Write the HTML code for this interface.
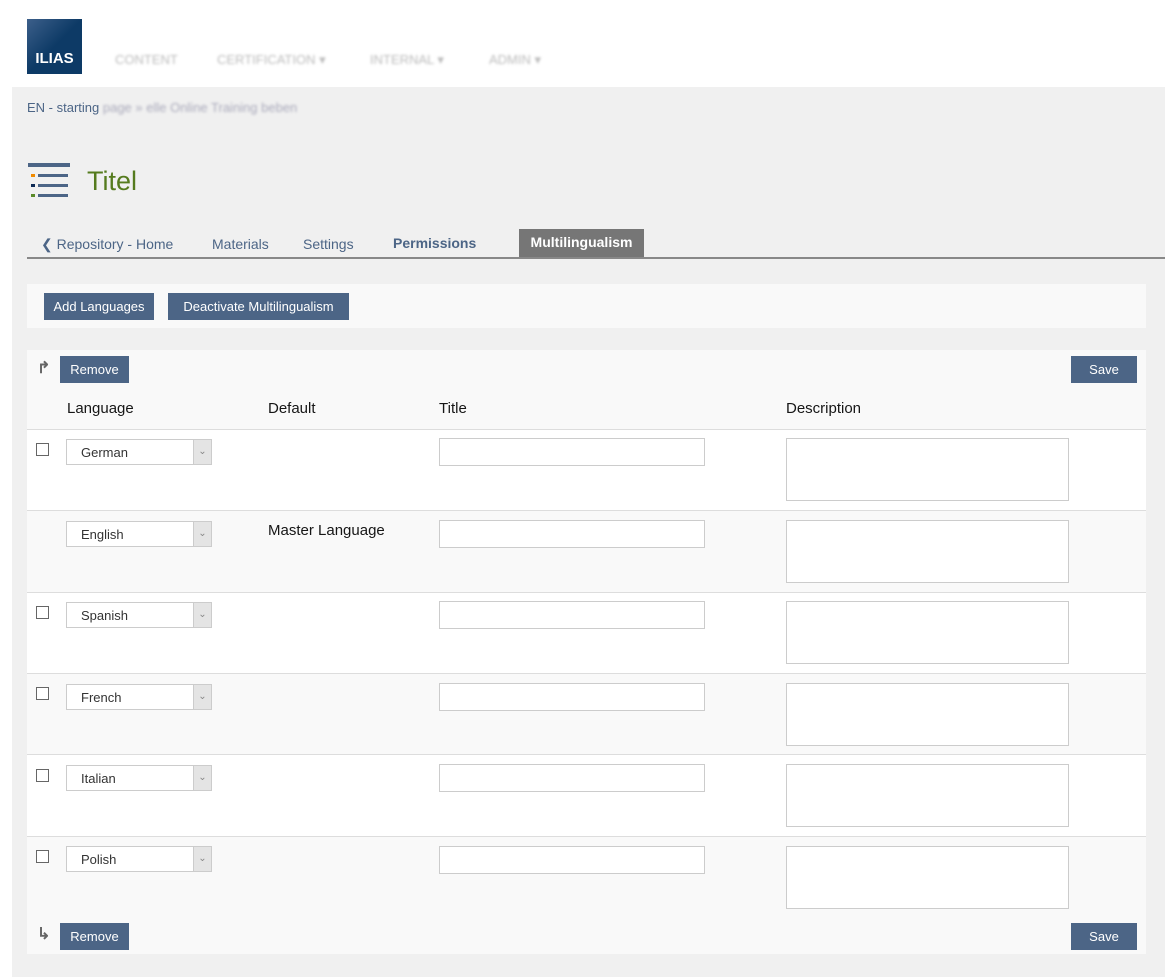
<!DOCTYPE html><html><head><style>
body{margin:0;width:1165px;height:977px;background:#fff;font-family:"Liberation Sans",sans-serif;position:relative;overflow:hidden;font-size:13px;color:#161616}
.a{position:absolute}
.btn{position:absolute;background:#4c6586;color:#fff;font-size:13px;height:27px;line-height:27px;text-align:center}
.blur{color:#bbb;filter:blur(1.2px);font-size:13px}
.sel{position:absolute;left:66px;width:146px;height:26px;background:#fff;border:1px solid #ccc;box-sizing:border-box}
.sel span{position:absolute;left:14px;top:5px;font-size:13px;color:#333}
.sel i{position:absolute;right:0;top:0;width:17px;height:24px;background:#e4e4e4;border-left:1px solid #ccc;color:#888;font-style:normal;font-size:10px;text-align:center;line-height:24px}
.in{position:absolute;left:439px;width:266px;height:28px;border:1px solid #ccc;background:#fff;box-sizing:border-box}
.ta{position:absolute;left:786px;width:283px;height:63px;border:1px solid #ccc;background:#fff;box-sizing:border-box}
.cb{position:absolute;left:36px;width:13px;height:13px;border:1px solid #666;background:#fff;box-sizing:border-box}
.row{position:absolute;left:27px;width:1119px;border-top:1px solid #ddd}
</style></head><body>
<div class="a" style="left:27px;top:19px;width:55px;height:55px;background:linear-gradient(135deg,#3c5f8a,#0d3a66 50%);color:#fff;font-weight:bold;font-size:15px;line-height:80px;text-align:center">ILIAS</div>
<div class="a blur" style="left:115px;top:52px">CONTENT</div>
<div class="a blur" style="left:217px;top:52px">CERTIFICATION ▾</div>
<div class="a blur" style="left:370px;top:52px">INTERNAL ▾</div>
<div class="a blur" style="left:489px;top:52px">ADMIN ▾</div>
<div class="a" style="left:12px;top:87px;width:1153px;height:890px;background:#f0f0f0"></div>
<div class="a" style="left:27px;top:100px;color:#4c6586;font-size:13px">EN - starting <span class="blur" style="color:#aab">page » elle Online Training beben</span></div>
<svg class="a" style="left:28px;top:163px" width="42" height="38"><rect x="0" y="0" width="42" height="4" fill="#4c6586"/><rect x="3" y="11" width="4" height="3" fill="#f08a00"/><rect x="3" y="21" width="4" height="3" fill="#0d2a55"/><rect x="3" y="31" width="4" height="3" fill="#5a8a2a"/><rect x="10" y="11" width="30" height="3" fill="#4c6586"/><rect x="10" y="21" width="30" height="3" fill="#4c6586"/><rect x="10" y="31" width="30" height="3" fill="#4c6586"/></svg>
<div class="a" style="left:87px;top:166px;font-size:27px;color:#557b1e">Titel</div>
<div class="a" style="left:41px;top:236px;color:#4c6586;font-size:14px">❮ Repository - Home</div>
<div class="a" style="left:212px;top:236px;color:#4c6586;font-size:14px">Materials</div>
<div class="a" style="left:303px;top:236px;color:#4c6586;font-size:14px">Settings</div>
<div class="a" style="left:393px;top:235px;color:#4c6586;font-size:14px;font-weight:bold">Permissions</div>
<div class="a" style="left:519px;top:229px;width:125px;height:28px;background:#767676;color:#fff;font-weight:bold;font-size:14px;line-height:27px;text-align:center">Multilingualism</div>
<div class="a" style="left:27px;top:257px;width:1138px;height:2px;background:#888"></div>
<div class="a" style="left:27px;top:284px;width:1119px;height:44px;background:#f9f9f9"></div>
<div class="btn" style="left:44px;top:293px;width:110px">Add Languages</div>
<div class="btn" style="left:168px;top:293px;width:181px">Deactivate Multilingualism</div>
<div class="a" style="left:27px;top:350px;width:1119px;height:604px;background:#f9f9f9"></div>
<div class="a" style="left:37px;top:358px;color:#666;font-size:16px;font-weight:bold">↱</div>
<div class="btn" style="left:60px;top:356px;width:69px">Remove</div>
<div class="btn" style="left:1071px;top:356px;width:66px">Save</div>
<div class="a" style="left:67px;top:400px;font-size:15px">Language</div>
<div class="a" style="left:268px;top:400px;font-size:15px">Default</div>
<div class="a" style="left:439px;top:400px;font-size:15px">Title</div>
<div class="a" style="left:786px;top:400px;font-size:15px">Description</div>
<div class="row" style="top:429px;height:81px;background:#fff"></div>
<div class="row" style="top:510px;height:82px;background:#f9f9f9"></div>
<div class="row" style="top:592px;height:81px;background:#fff"></div>
<div class="row" style="top:673px;height:81px;background:#f9f9f9"></div>
<div class="row" style="top:754px;height:82px;background:#fff"></div>
<div class="row" style="top:836px;height:81px;background:#f9f9f9"></div>
<div class="cb" style="top:443px"></div><div class="sel" style="top:439px"><span>German</span><i>⌄</i></div><div class="in" style="top:438px"></div><div class="ta" style="top:438px"></div>
<div class="sel" style="top:521px"><span>English</span><i>⌄</i></div><div class="a" style="left:268px;top:522px;font-size:15px">Master Language</div><div class="in" style="top:520px"></div><div class="ta" style="top:520px"></div>
<div class="cb" style="top:606px"></div><div class="sel" style="top:602px"><span>Spanish</span><i>⌄</i></div><div class="in" style="top:601px"></div><div class="ta" style="top:601px"></div>
<div class="cb" style="top:687px"></div><div class="sel" style="top:684px"><span>French</span><i>⌄</i></div><div class="in" style="top:683px"></div><div class="ta" style="top:683px"></div>
<div class="cb" style="top:769px"></div><div class="sel" style="top:765px"><span>Italian</span><i>⌄</i></div><div class="in" style="top:764px"></div><div class="ta" style="top:764px"></div>
<div class="cb" style="top:850px"></div><div class="sel" style="top:846px"><span>Polish</span><i>⌄</i></div><div class="in" style="top:846px"></div><div class="ta" style="top:846px"></div>
<div class="a" style="left:37px;top:924px;color:#666;font-size:16px;font-weight:bold">↳</div>
<div class="btn" style="left:60px;top:923px;width:69px">Remove</div>
<div class="btn" style="left:1071px;top:923px;width:66px">Save</div>
</body></html>
